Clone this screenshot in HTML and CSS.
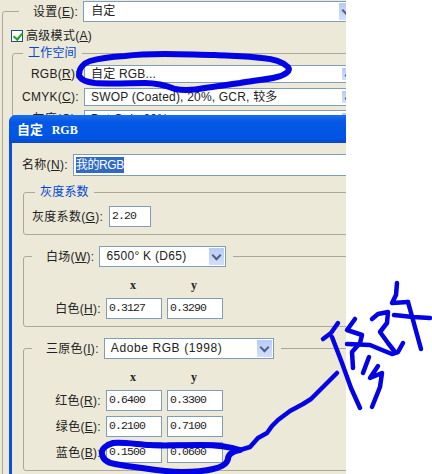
FILE: index.html
```html
<!DOCTYPE html>
<html lang="zh-CN">
  <head>
    <meta charset="UTF-8" />
    <title>颜色设置</title>
    <link rel="stylesheet" href="styles.css">
  </head>
  <body>
    <div class="window">
      <!-- 后面的颜色设置窗口 -->
      <fieldset class="group outer">
        <legend class="legend-row settings">
          <span class="label">设置(<u>E</u>):</span>
          <div class="select settings-select">自定<span class="arrow"></span></div>
        </legend>
        <div class="check-row">
          <span class="checkbox"></span>
          <span class="label">高级模式(<u>A</u>)</span>
        </div>
        <fieldset class="group workspace">
          <legend class="title">工作空间</legend>
          <div class="ws-row">
            <span class="label ws-label">RGB(<u>R</u>):</span>
            <div class="select ws-select">自定 RGB...<span class="arrow"></span></div>
          </div>
          <div class="ws-row">
            <span class="label ws-label">CMYK(<u>C</u>):</span>
            <div class="select ws-select">SWOP (Coated), 20%, GCR, 较多<span class="arrow"></span></div>
          </div>
          <div class="ws-row">
            <span class="label ws-label">灰度(<u>G</u>):</span>
            <div class="select ws-select">Dot Gain 20%<span class="arrow"></span></div>
          </div>
        </fieldset>
      </fieldset>

      <!-- 自定 RGB 对话框 -->
      <div class="dialog">
        <div class="titlebar">自定 <b>RGB</b></div>
        <div class="dialog-body">
          <div class="name-row">
            <span class="label">名称(<u>N</u>):</span>
            <div class="field name-field"><span class="selected">我的RGB</span></div>
          </div>

          <fieldset class="group gamma">
            <legend class="title">灰度系数</legend>
            <div class="gamma-row">
              <span class="label">灰度系数(<u>G</u>):</span>
              <div class="field gamma-field">2.20</div>
            </div>
          </fieldset>

          <fieldset class="group white">
            <legend class="legend-row">
              <span class="label">白场(<u>W</u>):</span>
              <div class="select white-select">6500° K (D65)<span class="arrow"></span></div>
            </legend>
            <div class="xy-grid">
              <span></span><span class="head">x</span><span class="head">y</span>
              <span class="label">白色(<u>H</u>):</span>
              <div class="field">0.3127</div>
              <div class="field">0.3290</div>
            </div>
          </fieldset>

          <fieldset class="group primaries">
            <legend class="legend-row">
              <span class="label">三原色(<u>I</u>):</span>
              <div class="select prim-select">Adobe RGB (1998)<span class="arrow"></span></div>
            </legend>
            <div class="xy-grid">
              <span></span><span class="head">x</span><span class="head">y</span>
              <span class="label">红色(<u>R</u>):</span>
              <div class="field">0.6400</div>
              <div class="field">0.3300</div>
              <span class="label">绿色(<u>E</u>):</span>
              <div class="field">0.2100</div>
              <div class="field">0.7100</div>
              <span class="label">蓝色(<u>B</u>):</span>
              <div class="field">0.1500</div>
              <div class="field">0.0600</div>
            </div>
          </fieldset>
        </div>
      </div>
    </div>

    <!-- 手写标记 -->
    <svg class="scribble" width="432" height="474" viewBox="0 0 432 474">
      <g class="ink-thick">
        <path d="M79 75 C79 68 84 63 90 61 C100 58 108 57 125 56 C140 54 150 54 165 54 C185 54 200 55 215 55 C235 56 250 56 262 58 C275 59 283 62 288 67 C291 71 285 75 277 77 C265 80 250 81 240 83 C225 85 215 87 205 88 C195 90 185 91 175 89 C165 85 158 83 145 83 C130 83 110 84 95 83 C86 82 80 79 79 75 Z" />
        <path d="M240 450 C228 446 215 445 200 445 C180 445 165 446 150 445 C135 444 122 442 113 443 C106 445 101 449 102 454 C103 460 108 463 115 464 C125 466 132 467 142 468 C155 470 168 472 182 472 C195 472 205 471 213 469 C222 467 227 464 228 459 C228 455 232 451 240 450 Z" />
      </g>
      <g class="ink">
        <path d="M240 450 L250 447 L258 438 L267 433 L272 426 L278 420 L290 411 L303 404 L311 399 L322 388 L330 380 L337 373" />
        <path d="M323 339 L331 333 L338 323" />
        <path d="M332 337 L342 363 L351 388 L360 408" />
        <path d="M355 319 L347 330 L362 335 L360 343 L352 352 L353 368" />
        <path d="M347 344 L370 345 L382 350 L392 354 L398 352 L403 343" />
        <path d="M369 357 L363 373" />
        <path d="M378 366 L370 378 L382 373 L380 387 L372 407" />
        <path d="M372 319 L378 314 L388 312 L387 323 L380 332 L388 343 L395 352" />
        <path d="M397 283 L396 295 L392 303 L408 302" />
        <path d="M394 315 L413 317 L430 318" />
        <path d="M408 302 L413 320 L421 349" />
      </g>
    </svg>
  </body>
</html>
```

FILE: styles.css
```css
* {
  box-sizing: border-box;
}

body {
  margin: 0;
  background: #fff;
  font-family: "Liberation Sans", "Noto Sans CJK SC", sans-serif;
  font-size: 12px;
  color: #222;
  overflow: hidden;
}

.window {
  position: relative;
  width: 346px;
  height: 474px;
  background: #ece9d8;
  overflow: hidden;
}

/* 分组框 */
.group {
  margin: 0;
  padding: 0;
  min-width: 0;
  border: 1px solid #aca899;
  border-radius: 3px;
}

.title {
  padding: 0 5px;
  line-height: 16px;
  letter-spacing: 0.2px;
  color: #0046d5;
}

.label {
  white-space: nowrap;
  line-height: 16px;
  letter-spacing: 0.3px;
}

.legend-row {
  display: flex;
  align-items: center;
  gap: 5px;
  padding: 0 7px 0 14px;
}

.select {
  position: relative;
  height: 21px;
  padding-left: 6px;
  border: 1px solid #7f9db9;
  background: #fff;
  line-height: 19px;
  letter-spacing: 0.2px;
}

.arrow {
  position: absolute;
  top: 1px;
  right: 1px;
  bottom: 1px;
  width: 15px;
  background: linear-gradient(#b9cbf5, #d2dffb);
}

.arrow::after {
  content: "";
  position: absolute;
  left: 4px;
  top: 4px;
  width: 5px;
  height: 5px;
  border-right: 2px solid #4d6185;
  border-bottom: 2px solid #4d6185;
  transform: rotate(45deg);
}

.field {
  height: 21px;
  padding-left: 2px;
  border: 1px solid #7f9db9;
  background: #fff;
  font-family: "Liberation Mono", "Noto Sans CJK SC", monospace;
  font-size: 11.5px;
  line-height: 17px;
  letter-spacing: -0.9px;
}

/* 后面的窗口 */
.outer {
  width: 420px;
  height: 500px;
  margin: 1px 0 0 2px;
  padding-left: 8px;
}

.settings {
  margin-left: 8px;
}

.settings-select {
  width: 273px;
  padding-left: 7px;
}

.check-row {
  display: flex;
  align-items: center;
  gap: 3px;
  margin-top: 6px;
}

.checkbox {
  position: relative;
  width: 12px;
  height: 12px;
  border: 1px solid #1c5180;
  background: #fff;
}

.checkbox::after {
  content: "";
  position: absolute;
  left: 3px;
  top: 0;
  width: 4px;
  height: 7px;
  border-right: 2px solid #21a121;
  border-bottom: 2px solid #21a121;
  transform: rotate(40deg);
}

.workspace {
  width: 400px;
  margin: 1px 0 0 1px;
  padding-top: 4px;
}

.workspace .title {
  margin-left: 10px;
}

.ws-row {
  display: flex;
  align-items: center;
  height: 18px;
  margin-bottom: 4.5px;
}

.ws-label {
  width: 66px;
  text-align: right;
  margin-right: 5px;
}

.ws-select {
  width: 275px;
  height: 18px;
  line-height: 17px;
}

.ws-select .arrow {
  top: 2px;
  bottom: 2px;
}

/* 对话框 */
.dialog {
  position: absolute;
  left: 9px;
  top: 115px;
  width: 360px;
  height: 359px;
  background: #0a50e0;
  border-radius: 7px 0 0 0;
  overflow: hidden;
}

.titlebar {
  height: 28px;
  padding-left: 8px;
  background: linear-gradient(#1a6cf0 0, #0458e4 25%, #0055e5 80%, #0a49c8 100%);
  color: #fff;
  font-weight: bold;
  line-height: 30px;
  font-size: 13px;
}

.titlebar b {
  font-family: "Liberation Serif", serif;
  font-size: 12px;
  margin-left: 5px;
}

.dialog-body {
  height: 331px;
  margin-left: 3px;
  padding: 11px 0 0 11px;
  background: #ece9d8;
}

.name-row {
  display: flex;
  align-items: center;
  gap: 5px;
  margin-left: -1px;
}

.name-field {
  width: 300px;
  height: 22px;
  padding-top: 2px;
  font-family: "Liberation Sans", "Noto Sans CJK SC", sans-serif;
  font-size: 12px;
  line-height: 16px;
  letter-spacing: -0.4px;
}

.selected {
  display: inline-block;
  height: 16px;
  line-height: 16px;
  background: #316ac5;
  color: #fff;
}

.gamma {
  width: 340px;
  height: 51px;
  margin-top: 8px;
  padding: 6px 0 0 8px;
}

.gamma .title {
  margin-left: 3px;
}

.gamma-row {
  display: flex;
  align-items: center;
  gap: 6px;
}

.gamma-field {
  width: 42px;
}

.white {
  width: 340px;
  height: 81px;
  margin-top: 11px;
}

.white .legend-row,
.primaries .legend-row {
  margin-left: 8px;
}

.white-select {
  width: 127px;
  letter-spacing: 0.3px;
}

.primaries {
  width: 340px;
  height: 133px;
  margin-top: 11px;
}

.prim-select {
  width: 170px;
  letter-spacing: 0.6px;
}

.xy-grid {
  display: grid;
  grid-template-columns: 77px 56px 56px;
  gap: 5px;
  margin-top: 11px;
  align-items: center;
}

.xy-grid .label {
  text-align: right;
}

.head {
  height: 15px;
  padding-right: 2px;
  line-height: 14px;
  text-align: center;
  font-family: "Liberation Serif", serif;
  font-weight: bold;
  font-size: 12px;
}

/* 手写标记 */
.scribble {
  position: absolute;
  left: 0;
  top: 0;
  pointer-events: none;
}

.scribble path {
  fill: none;
  stroke: #0303e4;
  stroke-linecap: round;
  stroke-linejoin: round;
}

.ink-thick path {
  stroke-width: 6;
}

.ink path {
  stroke-width: 4.5;
}
```
